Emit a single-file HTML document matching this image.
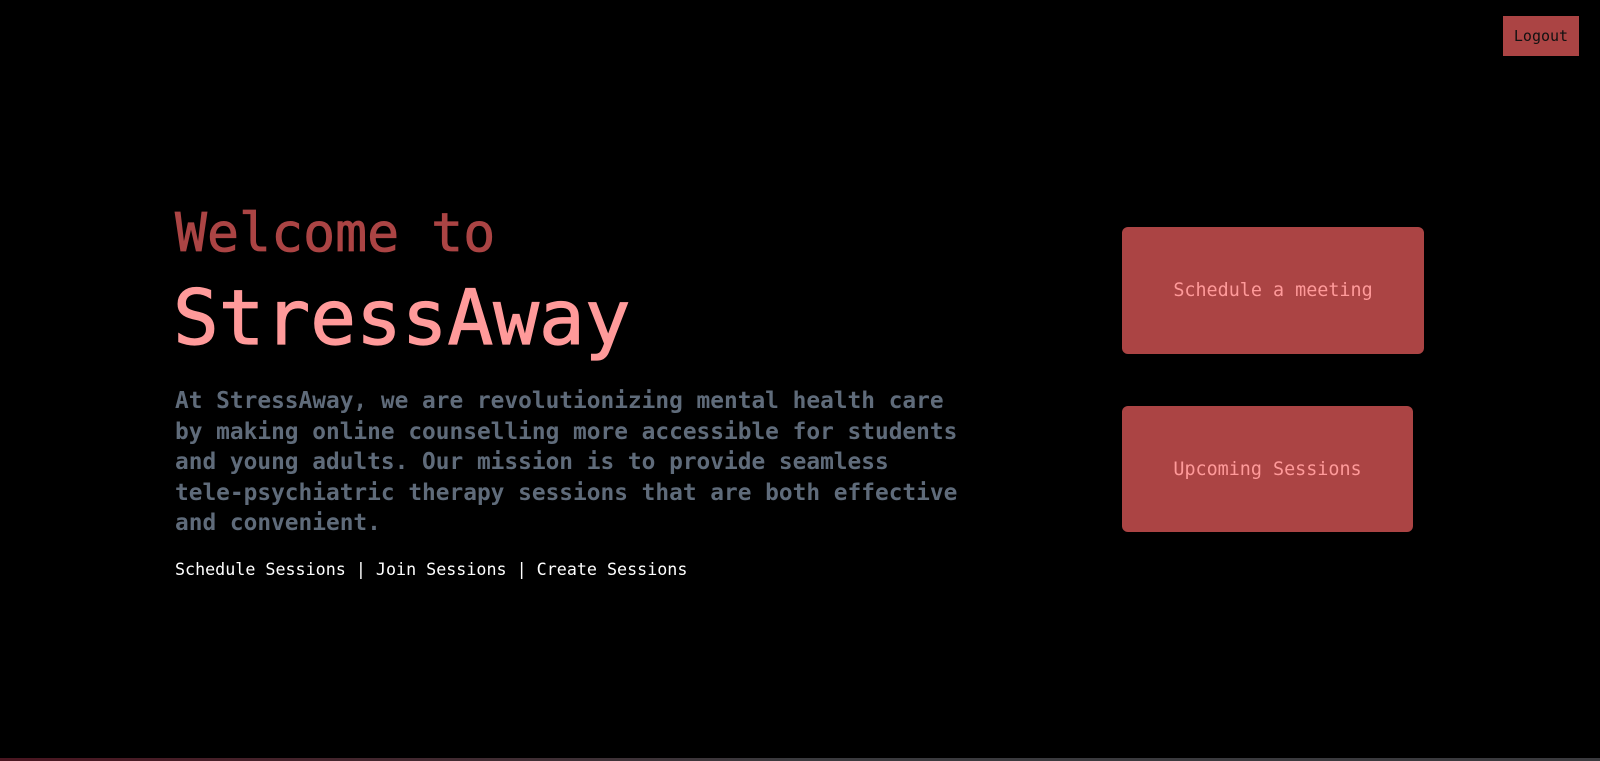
<!DOCTYPE html>
<html><head><style>
html,body{margin:0;padding:0;background:#000;width:1600px;height:761px;overflow:hidden;position:relative;font-family:"DejaVu Sans Mono","Liberation Mono",monospace}
.a{position:absolute;white-space:nowrap}
.btn{position:absolute;background:#ab4444;color:#ff9a9a;border-radius:6px;display:flex;align-items:center;justify-content:center;font-size:18.4px}
</style></head><body>
<div class="a" style="left:1503px;top:16px;width:76px;height:40px;background:#ab4444;color:#111;font-size:15px;display:flex;align-items:center;justify-content:center">Logout</div>
<div class="a" style="left:175px;top:203px;font-size:53.2px;line-height:60px;color:#ab4444;-webkit-text-stroke:0.8px #ab4444">Welcome to</div>
<div class="a" style="left:173px;top:274px;font-size:76px;line-height:88px;color:#ff9a9a;-webkit-text-stroke:1.2px #ff9a9a">StressAway</div>
<div class="a" style="left:175px;top:386px;font-size:22.8px;line-height:30.6px;color:#5f6b7a;font-weight:bold">At StressAway, we are revolutionizing mental health care<br>by making online counselling more accessible for students<br>and young adults. Our mission is to provide seamless<br>tele-psychiatric therapy sessions that are both effective<br>and convenient.</div>
<div class="a" style="left:175px;top:559px;font-size:16.7px;line-height:20px;color:#fff">Schedule Sessions | Join Sessions | Create Sessions</div>
<div class="btn" style="left:1122px;top:227px;width:302px;height:127px">Schedule a meeting</div>
<div class="btn" style="left:1122px;top:406px;width:291px;height:126px">Upcoming Sessions</div>
<div class="a" style="left:0;top:758px;width:1600px;height:3px;background:linear-gradient(90deg,#4a1520,#3a3a3e 50%,#3a3a3e)"></div>
</body></html>
